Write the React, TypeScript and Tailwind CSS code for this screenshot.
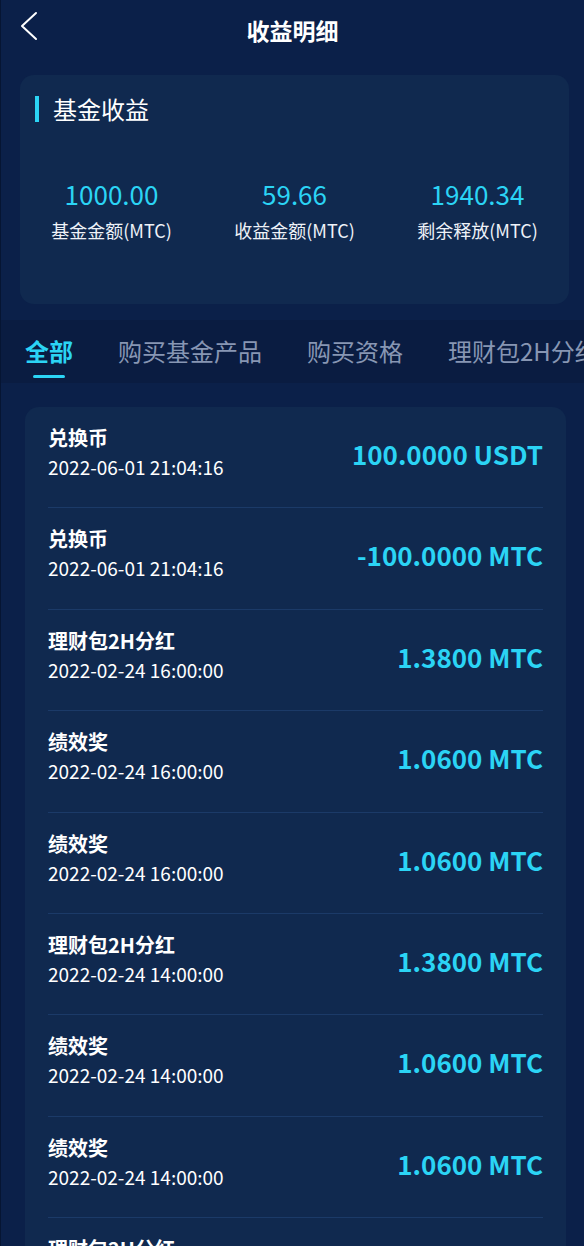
import React from "react";

const rows = [
  { t: "兑换币", d: "2022-06-01 21:04:16", a: "100.0000 USDT" },
  { t: "兑换币", d: "2022-06-01 21:04:16", a: "-100.0000 MTC" },
  { t: "理财包2H分红", d: "2022-02-24 16:00:00", a: "1.3800 MTC" },
  { t: "绩效奖", d: "2022-02-24 16:00:00", a: "1.0600 MTC" },
  { t: "绩效奖", d: "2022-02-24 16:00:00", a: "1.0600 MTC" },
  { t: "理财包2H分红", d: "2022-02-24 14:00:00", a: "1.3800 MTC" },
  { t: "绩效奖", d: "2022-02-24 14:00:00", a: "1.0600 MTC" },
  { t: "绩效奖", d: "2022-02-24 14:00:00", a: "1.0600 MTC" },
  { t: "理财包2H分红", d: "2022-02-24 14:00:00", a: "1.3800 MTC" },
];

export default function App() {
  return (
    <div
      className="w-[584px] h-[1246px] overflow-hidden bg-[#0b2049] border-l border-[#061533] text-white"
      style={{ fontFamily: '"Noto Sans CJK SC", "Noto Sans", sans-serif' }}
    >
      {/* header */}
      <div className="relative h-[60px] flex items-center justify-center">
        <svg
          className="absolute left-[18px] top-[11px]"
          width="20"
          height="30"
          viewBox="0 0 20 30"
          fill="none"
          stroke="white"
          strokeWidth="2"
          strokeLinecap="round"
          strokeLinejoin="round"
        >
          <polyline points="17,2 3,15 17,28" />
        </svg>
        <div className="text-[23px] font-bold leading-[30px]">收益明细</div>
      </div>

      {/* summary card */}
      <div className="mt-[15px] ml-[19px] w-[549px] h-[229px] rounded-[14px] bg-[#10294f]">
        <div className="pt-[21px] pl-[15px] flex items-center h-[47px]">
          <div className="w-[4px] h-[26px] bg-[#2bd4f5]" />
          <div className="ml-[14px] text-[24px] leading-[26px]">基金收益</div>
        </div>
        <div className="mt-[56px] grid grid-cols-3 text-center">
          {[
            ["1000.00", "基金金额(MTC)"],
            ["59.66", "收益金额(MTC)"],
            ["1940.34", "剩余释放(MTC)"],
          ].map(([n, l]) => (
            <div key={l} className="flex flex-col items-center">
              <div className="text-[26px] leading-[32px] text-[#2bd4f5]">{n}</div>
              <div className="mt-[8px] text-[18px] leading-[24px] text-[#eef2f8]">{l}</div>
            </div>
          ))}
        </div>
      </div>

      {/* tabs */}
      <div className="mt-[16px] h-[63px] bg-[#0a1c41] pl-[24px] pt-[15px] flex gap-[45px] whitespace-nowrap overflow-hidden">
        <div className="flex flex-col items-center">
          <div className="text-[24px] leading-[32px] font-bold text-[#2bd4f5]">全部</div>
          <div className="mt-[8px] w-[32px] h-[3px] rounded-full bg-[#2bd4f5]" />
        </div>
        <div className="text-[24px] leading-[32px] text-[#8796b3]">购买基金产品</div>
        <div className="text-[24px] leading-[32px] text-[#8796b3]">购买资格</div>
        <div className="text-[24px] leading-[32px] text-[#8796b3]">理财包2H分红</div>
      </div>

      {/* list */}
      <div className="mt-[24px] ml-[24px] w-[541px] rounded-t-[14px] bg-[#10294f] px-[23px]">
        {rows.map((r, i) => (
          <div
            key={i}
            className="h-[101.4px] box-border border-b border-[#1b3a68] flex justify-between items-start pt-[17px]"
          >
            <div>
              <div className="text-[20px] leading-[28px] font-bold">{r.t}</div>
              <div className="mt-[2px] text-[19px] leading-[26px]">{r.d}</div>
            </div>
            <div className="mt-[13px] text-[26px] leading-[34px] font-bold text-[#2bd4f5]">{r.a}</div>
          </div>
        ))}
      </div>
    </div>
  );
}
